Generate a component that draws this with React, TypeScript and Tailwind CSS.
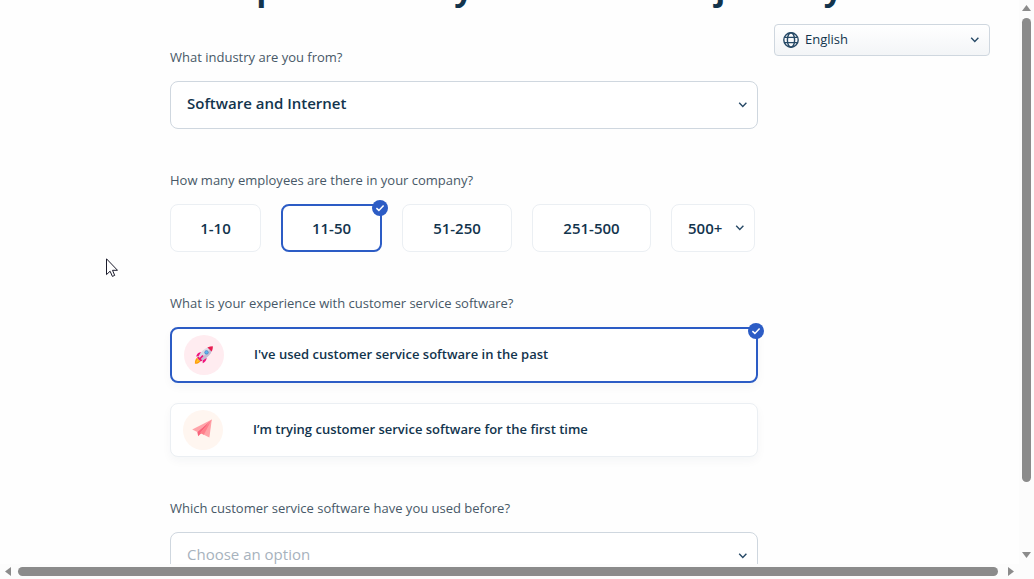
import { useState } from "react";

const sizes = [
  { label: "1-10", width: "w-[91px]" },
  { label: "11-50", width: "w-[101px]" },
  { label: "51-250", width: "w-[110px]" },
  { label: "251-500", width: "w-[119px]" },
];

function Chevron({ className }: { className: string }) {
  return (
    <svg viewBox="0 0 10 8" className={`pointer-events-none absolute h-2 w-2.5 ${className}`} aria-hidden="true">
      <path d="M1.2 1.8 4.8 5.4 8.4 1.8" fill="none" stroke="#264966" strokeWidth="1.4" />
    </svg>
  );
}

function CheckBadge() {
  return (
    <svg viewBox="0 0 16 16" className="absolute -top-1.5 -right-2 h-4 w-4" aria-hidden="true">
      <circle cx="8" cy="8" r="8" fill="#2c5cc5" />
      <path d="M4.4 8.1 6.9 10.4 11.6 5.5" fill="none" stroke="#fff" strokeWidth="1.5" />
    </svg>
  );
}

function Rocket() {
  return (
    <svg viewBox="0 0 20 20" className="h-5 w-5" aria-hidden="true">
      <path d="M3.6 12.2C1.4 13.6.8 16 .9 18.8 3.7 18.9 6 17.7 6.6 15.4Z" fill="#ff9d0a" />
      <path d="M3.4 14.2 1.9 17.8 5.4 16Z" fill="#ffc62e" />
      <path d="M7.2 7.3C4.6 7.2 3 8.8 2.1 11.4L5.8 11.2Z" fill="#f0127c" />
      <path d="M12.6 12.5C12.8 15 11 17.2 8.7 18.2L8.6 14.2Z" fill="#f0127c" />
      <path d="M14.4 2.2C10.5 3.4 7.3 6 4.9 10.6L3.4 13.4 6.5 16.3 9.3 14.9C14 12.4 16.8 9.3 17.8 5.6Z" fill="#dcd8e4" />
      <path d="M16.3 4C12.8 8 9.4 11.4 5.1 15L6.5 16.3 9.3 14.9C14 12.4 16.8 9.3 17.8 5.6Z" fill="#c6bcd3" />
      <path d="M13.4 2.6C15.2 1.7 17 1.3 18.8 1.3 19 3.1 18.6 4.9 17.6 6.6Z" fill="#e81e52" />
      <circle cx="12.5" cy="7.4" r="2.1" fill="#4a86c4" />
      <circle cx="12.5" cy="7.4" r="1.4" fill="#5eb4ee" />
      <path d="M3.2 12.8 4.4 11.5 8.4 15.4 6.7 16.6Z" fill="#e81e72" />
      <path d="M9 10.5 5.2 14.5" stroke="#f0127c" strokeWidth="1.7" />
    </svg>
  );
}

function PaperPlane() {
  return (
    <svg viewBox="1 1 20 20" className="h-5 w-5 overflow-visible" aria-hidden="true">
      <path d="M19.8.4.2 10.6 5.3 13Z" fill="#ffa3a8" />
      <path d="M19.8.4 5.3 13 6.2 17.2 9.2 14.3Z" fill="#f9637a" />
      <path d="M19.8.4 8.3 13.9 17.4 18.6Z" fill="#ffa3a8" />
      <path d="M19.8.4 8.3 13.9 11.8 15.7Z" fill="#ff7f8b" />
    </svg>
  );
}

function Globe() {
  return (
    <svg viewBox="0 0 16 16" className="pointer-events-none absolute left-[9px] top-2 h-4 w-4" fill="none" stroke="#264966" strokeWidth="1.4" aria-hidden="true">
      <circle cx="8" cy="8" r="7.2" />
      <ellipse cx="8" cy="8" rx="3.6" ry="7.2" />
      <path d="M1.5 5.4h13M1.5 10.6h13" />
    </svg>
  );
}

const labelClass = "mb-3.5 block text-[13px] leading-5 text-[#475867]";
const fieldClass =
  "block h-12 w-full appearance-none rounded-lg border border-[#cfd7df] bg-white px-4 pb-1 text-[15px] outline-none";

export default function App() {
  const [size, setSize] = useState("11-50");
  const [used, setUsed] = useState(true);

  const experiences = [
    { value: true, text: "I've used customer service software in the past", icon: <Rocket />, tint: "bg-[#ffecf0]" },
    { value: false, text: "I’m trying customer service software for the first time", icon: <PaperPlane />, tint: "bg-[#fff6f0]" },
  ];

  return (
    <div className="grid h-screen grid-cols-[minmax(0,1fr)_15px] grid-rows-[minmax(0,1fr)_15px] overflow-hidden bg-[#fcfcfc] font-['Open_Sans','Noto_Sans',sans-serif] text-[#12344d]">
      <main className="flex items-start justify-between gap-4 overflow-hidden bg-[#fefefe] pl-[170px] pr-[29px]">
        <form className="w-full max-w-[588px]">
          <h1 className="-mt-9 mb-[35px] h-12 whitespace-nowrap text-[33px] leading-[48px] font-bold">
            Let's personalize your Freshdesk journey
          </h1>
          <div className="flex flex-col gap-[41px]">
            <div>
              <label htmlFor="industry" className={labelClass}>What industry are you from?</label>
              <div className="relative">
                <select id="industry" className={`${fieldClass} font-semibold`}>
                  <option>Software and Internet</option>
                </select>
                <Chevron className="right-2.5 top-5" />
              </div>
            </div>

            <fieldset>
              <legend className={labelClass}>How many employees are there in your company?</legend>
              <div className="flex gap-5">
                {sizes.map((s) => (
                  <label
                    key={s.label}
                    className={`relative flex h-12 shrink-0 items-center justify-center rounded-lg bg-white text-[15px] font-semibold ${s.width} ${
                      size === s.label ? "border-2 border-[#2c5cc5]" : "border border-[#ebeff3]"
                    }`}
                  >
                    <input type="radio" name="size" className="sr-only" checked={size === s.label} onChange={() => setSize(s.label)} />
                    {s.label}
                    {size === s.label && <CheckBadge />}
                  </label>
                ))}
                <div className="relative shrink-0">
                  <select aria-label="More than 500" className="h-12 w-[84px] appearance-none rounded-lg border border-[#ebeff3] bg-white pl-4 text-[15px] font-semibold outline-none">
                    <option>500+</option>
                  </select>
                  <Chevron className="right-2.5 top-5" />
                </div>
              </div>
            </fieldset>

            <fieldset>
              <legend className={labelClass}>What is your experience with customer service software?</legend>
              <div className="flex flex-col gap-5">
                {experiences.map((e) => (
                  <label
                    key={e.text}
                    className={`relative flex items-center gap-[30px] rounded-lg bg-white px-3 py-1.5 text-[13px] font-semibold shadow-[0_4px_10px_rgba(18,52,77,0.04)] ${
                      used === e.value ? "border-2 border-[#2c5cc5]" : "border border-[#ebeff3]"
                    }`}
                  >
                    <input type="radio" name="experience" className="sr-only" checked={used === e.value} onChange={() => setUsed(e.value)} />
                    <span className={`flex h-10 w-10 items-center justify-center rounded-full ${e.tint}`}>{e.icon}</span>
                    {e.text}
                    {used === e.value && <CheckBadge />}
                  </label>
                ))}
              </div>
            </fieldset>

            <div>
              <label htmlFor="previous" className={labelClass}>Which customer service software have you used before?</label>
              <div className="relative">
                <select id="previous" className={`${fieldClass} text-[#a7b2bd]`}>
                  <option>Choose an option</option>
                </select>
                <Chevron className="right-2.5 top-5" />
              </div>
            </div>
          </div>
        </form>

        <div className="relative mt-6 w-[216px] shrink-0">
          <select
            aria-label="Language"
            className="block h-8 w-full appearance-none rounded border border-[#cfd7df] bg-linear-to-b from-white to-[#f3f5f7] pl-[30px] text-[13px] outline-none"
          >
            <option>English</option>
          </select>
          <Globe />
          <Chevron className="right-2.5 top-3" />
        </div>
      </main>

      <div className="flex flex-col items-center pt-[5px] pb-1.5" aria-hidden="true">
        <svg viewBox="0 0 9 6" className="h-1.5 w-[9px]"><path d="M0 6 4.5 0 9 6Z" fill="#8b8b8b" /></svg>
        <div className="mt-[7px] w-[9px] grow rounded-full bg-[#8b8b8b]" />
        <svg viewBox="0 0 9 6" className="mt-[70px] h-1.5 w-[9px]"><path d="M0 0 4.5 6 9 0Z" fill="#8b8b8b" /></svg>
      </div>
      <div className="flex items-center pl-[5px] pr-[5px]" aria-hidden="true">
        <svg viewBox="0 0 6 9" className="h-[9px] w-1.5"><path d="M6 0 0 4.5 6 9Z" fill="#8b8b8b" /></svg>
        <div className="ml-[7px] h-[9px] grow rounded-full bg-[#8b8b8b]" />
        <svg viewBox="0 0 6 9" className="ml-2.5 h-[9px] w-1.5"><path d="M0 0 6 4.5 0 9Z" fill="#8b8b8b" /></svg>
      </div>

      <svg viewBox="0 0 12 19" className="pointer-events-none absolute left-[106px] top-[258px] h-[19px] w-3" aria-hidden="true">
        <path d="M.5.8v15.8l3.6-3.4 2.3 5.2 2.3-1-2.2-5.1h5Z" fill="#fff" stroke="#1b1b2b" strokeWidth="1" />
      </svg>
    </div>
  );
}
